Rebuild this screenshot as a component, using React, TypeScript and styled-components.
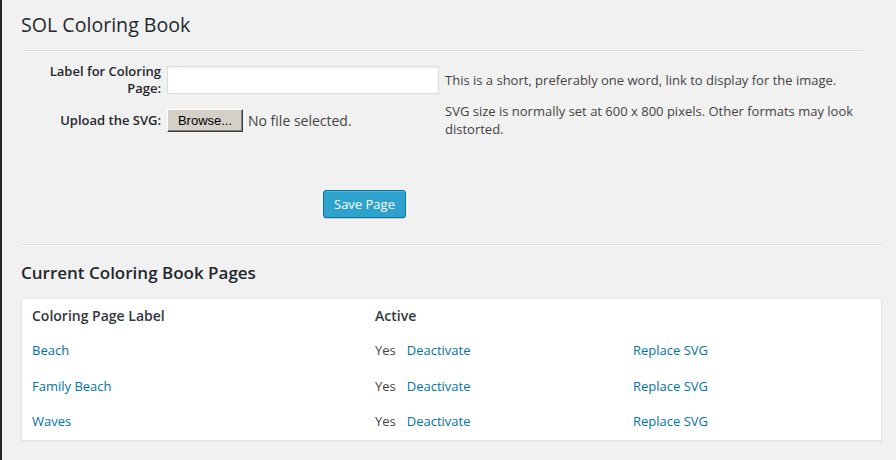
import React, { useState } from 'react';
import styled, { createGlobalStyle } from 'styled-components';

const GlobalStyle = createGlobalStyle`
  html, body {
    margin: 0;
    padding: 0;
    background: #f1f1f1;
  }
  body {
    font-family: "Open Sans", "Liberation Sans", sans-serif;
    color: #444;
  }
`;

const Page = styled.div`
  min-height: 460px;
  box-sizing: border-box;
  border-left: 2px solid #252525;
  padding: 0 14px 0 19px;
`;

const Title = styled.h1`
  margin: 0;
  padding-top: 10px;
  font-size: 19.6px;
  line-height: 29px;
  font-weight: 400;
  color: #23282d;
`;

const Rule = styled.hr<{ $inset?: number; $top: number }>`
  margin: ${p => p.$top}px ${p => p.$inset ?? 0}px 0 ${p => (p.$inset ? 2 : 0)}px;
  height: 0;
  border: 0;
  border-top: 1px solid #dddddd;
  border-bottom: 1px solid #fafafa;
`;

const Form = styled.form`
  padding-top: 14px;
  padding-right: 19px;
  display: grid;
  grid-template-columns: 140px 272px 1fr;
  column-gap: 6px;
  row-gap: 5px;
  align-items: start;
`;

const Label = styled.label<{ $pad: number }>`
  text-align: right;
  font-size: 13px;
  line-height: 17px;
  font-weight: 600;
  color: #23282d;
  margin-top: ${p => p.$pad}px;
`;

const TextInput = styled.input`
  box-sizing: border-box;
  width: 272px;
  height: 28px;
  margin: 0;
  border: 1px solid #dddddd;
  box-shadow: inset 0 1px 2px rgba(0, 0, 0, 0.07);
  background: #fff;
  font-family: inherit;
  font-size: 14px;
`;

const Description = styled.p<{ $pad: number }>`
  margin: 0;
  padding-top: ${p => p.$pad}px;
  font-size: 13px;
  line-height: 18px;
  color: #444;
`;

const FileField = styled.div`
  display: flex;
  align-items: center;
  gap: 5px;
  height: 23px;
  margin-top: 7px;
`;

const BrowseButton = styled.button`
  box-sizing: border-box;
  width: 76px;
  height: 23px;
  padding: 0 0 1px;
  background: #d4d0c8;
  border: 1px solid;
  border-color: #ffffff #404040 #404040 #ffffff;
  box-shadow: inset -1px -1px 0 #808080;
  font-family: "Liberation Sans", Arial, sans-serif;
  font-size: 13px;
  color: #000;
`;

const FileStatus = styled.span`
  font-size: 14px;
  color: #444;
`;

const Actions = styled.div`
  grid-column: 1 / -1;
  padding: 47px 0 0 302px;
`;

const PrimaryButton = styled.button`
  box-sizing: border-box;
  height: 28px;
  padding: 0 10px 2px;
  background: #2ea2cc;
  border: 1px solid #0074a2;
  border-radius: 3px;
  box-shadow: inset 0 1px 0 rgba(120, 200, 230, 0.5), 0 1px 0 rgba(0, 0, 0, 0.15);
  color: #fff;
  font-family: inherit;
  font-size: 13px;
  line-height: 26px;
`;

const SectionTitle = styled.h2`
  margin: 16px 0 0;
  font-size: 17px;
  line-height: 22px;
  font-weight: 600;
  color: #23282d;
`;

const Table = styled.table`
  margin-top: 14px;
  width: 100%;
  border-collapse: separate;
  border-spacing: 0;
  table-layout: fixed;
  background: #fff;
  border: 1px solid #e5e5e5;
  box-shadow: 0 1px 1px rgba(0, 0, 0, 0.04);
`;

const HeadCell = styled.th<{ $w?: number }>`
  box-sizing: border-box;
  width: ${p => (p.$w ? `${p.$w}px` : 'auto')};
  padding: 8px 10px;
  text-align: left;
  font-size: 14px;
  line-height: 18px;
  font-weight: 600;
  color: #32373c;
`;

const Cell = styled.td`
  padding: 8px 10px;
  font-size: 13px;
  line-height: 19.5px;
  color: #444;
`;

const Link = styled.a`
  color: #0074a2;
  text-decoration: none;
  cursor: pointer;
`;

const Status = styled.span`
  margin-right: 11px;
`;

const pages = ['Beach', 'Family Beach', 'Waves'];

export default function App() {
  const [label, setLabel] = useState('');

  return (
    <Page>
      <GlobalStyle />
      <Title>SOL Coloring Book</Title>
      <Rule $inset={19} $top={11} />
      <Form onSubmit={e => e.preventDefault()}>
        <Label htmlFor="cb-label" $pad={-3}>Label for Coloring Page:</Label>
        <TextInput id="cb-label" value={label} onChange={e => setLabel(e.currentTarget.value)} />
        <Description $pad={5}>This is a short, preferably one word, link to display for the image.</Description>

        <Label $pad={10}>Upload the SVG:</Label>
        <FileField>
          <BrowseButton type="button">Browse...</BrowseButton>
          <FileStatus>No file selected.</FileStatus>
        </FileField>
        <Description $pad={0}>SVG size is normally set at 600 x 800 pixels. Other formats may look distorted.</Description>

        <Actions>
          <PrimaryButton type="submit">Save Page</PrimaryButton>
        </Actions>
      </Form>
      <Rule $top={26} />
      <SectionTitle>Current Coloring Book Pages</SectionTitle>
      <Table>
        <thead>
          <tr>
            <HeadCell $w={343}>Coloring Page Label</HeadCell>
            <HeadCell $w={258}>Active</HeadCell>
            <HeadCell></HeadCell>
          </tr>
        </thead>
        <tbody>
          {pages.map(name => (
            <tr key={name}>
              <Cell><Link>{name}</Link></Cell>
              <Cell><Status>Yes</Status><Link>Deactivate</Link></Cell>
              <Cell><Link>Replace SVG</Link></Cell>
            </tr>
          ))}
        </tbody>
      </Table>
    </Page>
  );
}
